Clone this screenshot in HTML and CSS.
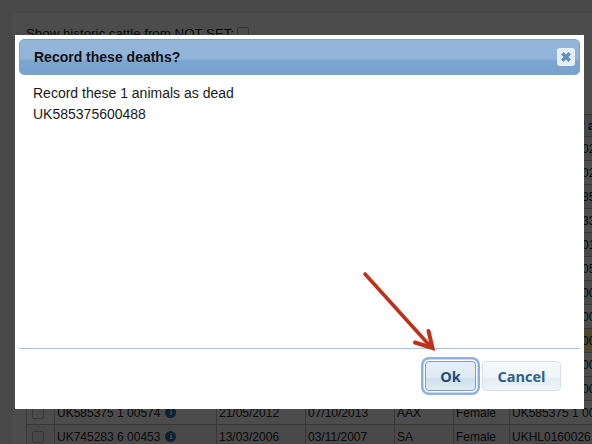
FILE: index.html
```html
<!DOCTYPE html>
<html lang="en">
<head>
<meta charset="utf-8">
<title>Record these deaths?</title>
<link rel="stylesheet" href="styles.css">
</head>
<body>
<main class="page">
  <div class="filter"><span>Show historic cattle from NOT SET:</span><input type="checkbox" class="check"></div>
  <table class="cattle">
    <thead><tr><th></th><th>Tag</th><th>Born</th><th>Died</th><th>Breed</th><th>Sex</th><th>Dam Tag Ref area</th></tr></thead>
    <tbody>
      <tr><td><input type="checkbox" class="check"></td><td>UK585375 1 00201</td><td>11/02/2011</td><td>04/09/2013</td><td>AAX</td><td>Female</td><td>UK585375 1 02</td></tr>
      <tr><td><input type="checkbox" class="check"></td><td>UK585375 1 00212</td><td>19/02/2011</td><td>12/08/2013</td><td>AAX</td><td>Female</td><td>UK585375 1 02</td></tr>
      <tr><td><input type="checkbox" class="check"></td><td>UK585375 1 00233</td><td>03/03/2011</td><td>22/07/2013</td><td>SA</td><td>Female</td><td>UK585375 1 85</td></tr>
      <tr><td><input type="checkbox" class="check"></td><td>UK585375 1 00240</td><td>14/03/2011</td><td>02/10/2013</td><td>AAX</td><td>Female</td><td>UK585375 1 33</td></tr>
      <tr><td><input type="checkbox" class="check"></td><td>UK585375 1 00255</td><td>21/03/2011</td><td>17/06/2013</td><td>AAX</td><td>Female</td><td>UK585375 1 01</td></tr>
      <tr><td><input type="checkbox" class="check"></td><td>UK585375 1 00261</td><td>02/04/2011</td><td>09/05/2013</td><td>SA</td><td>Female</td><td>UK585375 1 05</td></tr>
      <tr><td><input type="checkbox" class="check"></td><td>UK585375 1 00278</td><td>16/04/2011</td><td>28/09/2013</td><td>AAX</td><td>Female</td><td>UK585375 1 00</td></tr>
      <tr><td><input type="checkbox" class="check"></td><td>UK585375 1 00289</td><td>29/04/2011</td><td>30/08/2013</td><td>AAX</td><td>Female</td><td>UK585375 1 00</td></tr>
      <tr class="flagged"><td><input type="checkbox" class="check"></td><td>UK585375 6 00488</td><td>08/05/2011</td><td>11/10/2013</td><td>AAX</td><td>Female</td><td>UK585375 1 00</td></tr>
      <tr><td><input type="checkbox" class="check"></td><td>UK585375 1 00502</td><td>20/05/2011</td><td>01/10/2013</td><td>SA</td><td>Female</td><td>UK585375 1 00</td></tr>
      <tr><td><input type="checkbox" class="check"></td><td>UK585375 1 00519</td><td>07/06/2011</td><td>15/07/2013</td><td>AAX</td><td>Female</td><td>UK585375 1 00</td></tr>
      <tr><td><input type="checkbox" class="check"></td><td><span class="tag">UK585375 1 00574<i class="info">i</i></span></td><td>21/05/2012</td><td>07/10/2013</td><td>AAX</td><td>Female</td><td>UK585375 1 00</td></tr>
      <tr><td><input type="checkbox" class="check"></td><td><span class="tag">UK745283 6 00453<i class="info">i</i></span></td><td>13/03/2006</td><td>03/11/2007</td><td>SA</td><td>Female</td><td>UKHL0160026</td></tr>
    </tbody>
  </table>
</main>
<div class="overlay"></div>
<section class="modal" role="dialog" aria-labelledby="dlg-title">
  <header class="modal-head">
    <h2 id="dlg-title">Record these deaths?</h2>
    <button class="close" aria-label="Close">
      <svg viewBox="0 0 12 12" width="12" height="12"><path d="M2.3 2.3 9.7 9.7M9.7 2.3 2.3 9.7" fill="none" stroke="#5f8fbe" stroke-width="3.4"/></svg>
    </button>
  </header>
  <div class="modal-body">
    <p>Record these 1 animals as dead</p>
    <p>UK585375600488</p>
  </div>
  <footer class="modal-foot">
    <button class="btn btn-ok">Ok</button>
    <button class="btn">Cancel</button>
  </footer>
</section>
<svg class="arrow" viewBox="0 0 592 444" width="592" height="444" aria-hidden="true">
  <path d="M365 274 431 347" fill="none" stroke="#c0311a" stroke-width="3.6" stroke-linecap="round"/>
  <path d="M428.5 331 432.5 348 415 342.5" fill="none" stroke="#c0311a" stroke-width="4" stroke-linecap="round" stroke-linejoin="miter"/>
</svg>
</body>
</html>
```
FILE: styles.css
```css
html, body {
  margin: 0;
  padding: 0;
  height: 444px;
  overflow: hidden;
  background: #f0f0f0;
  font-family: "Liberation Sans", Arial, sans-serif;
}

.page {
  margin: 13px 0 0 13px;
  height: 431px;
  background: #fff;
  padding: 12px 0 0 13px;
  box-sizing: border-box;
  overflow: hidden;
}

.filter {
  display: flex;
  align-items: center;
  gap: 3px;
  font-size: 13.3px;
  color: #222;
  height: 16px;
  margin-bottom: 73px;
  white-space: nowrap;
}

.check {
  display: block;
  width: 12px;
  height: 12px;
  margin: 0;
  appearance: none;
  background: transparent;
  border: 1px solid #b4b4b4;
  border-radius: 2px;
}

.cattle {
  border-collapse: collapse;
  table-layout: fixed;
  width: 620px;
  font-size: 12px;
  color: #222;
}

.cattle th {
  height: 21px;
  padding: 0 3px 0 2px;
  text-align: left;
  color: #14466e;
  font-weight: bold;
  border: 1px solid #bbb;
  background: #e9eef3;
}

.cattle td {
  height: 23px;
  padding: 0 3px 0 2px;
  border: 1px solid #bbb;
  white-space: nowrap;
  overflow: hidden;
}

.cattle th:nth-child(1), .cattle td:nth-child(1) { width: 21px; padding: 0 3px 0 5px; }
.cattle th:nth-child(1), .cattle td:nth-child(1) { width: 19px; }
.cattle th:nth-child(2), .cattle td:nth-child(2) { width: 156px; }
.cattle th:nth-child(3), .cattle td:nth-child(3) { width: 83px; }
.cattle th:nth-child(4), .cattle td:nth-child(4) { width: 83px; }
.cattle th:nth-child(5), .cattle td:nth-child(5) { width: 53px; }
.cattle th:nth-child(6), .cattle td:nth-child(6) { width: 50px; }

.cattle tbody tr:nth-child(odd) td { background: #f6f6f6; }
.cattle tbody tr.flagged td { background: #ffee99; }

.tag {
  display: inline-flex;
  align-items: center;
  gap: 5px;
}

.info {
  display: inline-block;
  width: 11px;
  height: 11px;
  border-radius: 50%;
  background: #2f6ea6;
  color: #fff;
  font: bold 9px/11px "Liberation Serif", serif;
  text-align: center;
}

.overlay {
  position: fixed;
  inset: 0;
  background: rgba(0, 0, 0, 0.7);
}

.modal {
  position: fixed;
  left: 15px;
  top: 35px;
  width: 569px;
  height: 374px;
  background: #fff;
  padding: 4px;
  box-sizing: border-box;
  display: flex;
  flex-direction: column;
}

.modal-head {
  height: 36px;
  box-sizing: border-box;
  display: flex;
  align-items: center;
  justify-content: space-between;
  padding: 0 4px 0 14px;
  border: 1px solid #79a3cc;
  border-radius: 5px;
  background: linear-gradient(#94b6da 0, #90b3d8 55%, #7aa5cf 62%, #78a3ce 100%);
}

.modal-head h2 {
  margin: 0;
  font-size: 14px;
  font-weight: bold;
  color: #111;
}

.close {
  width: 18px;
  height: 18px;
  padding: 0;
  display: flex;
  align-items: center;
  justify-content: center;
  border: 0;
  border-radius: 3px;
  background: #e6eff8;
}

.modal-body {
  flex: 1;
  padding: 8px 14px 0;
  font-size: 14px;
  line-height: 21px;
  color: #1a1a1a;
}

.modal-body p {
  margin: 0;
}

.modal-foot {
  height: 57px;
  box-sizing: border-box;
  border-top: 1px solid #a9c3dc;
  display: flex;
  align-items: center;
  justify-content: flex-end;
  gap: 6px;
  padding: 0 19px 2px 0;
}

.btn {
  height: 30px;
  width: 79px;
  box-sizing: border-box;
  padding: 0;
  border: 1px solid #d3e1ee;
  border-radius: 4px;
  background: linear-gradient(#f5f9fc 0, #eef4f9 55%, #e3edf5 60%, #eef4f9 100%);
  font-family: "Open Sans", sans-serif;
  font-size: 14.5px;
  font-weight: 700;
  color: #2f5f8c;
}

.btn-ok {
  width: 51px;
  color: #1f4c78;
  border: 1px solid #7e9fc4;
  background: linear-gradient(#e6f0f8 0, #dfeaf4 55%, #d0e0ee 60%, #e0ebf5 100%);
  box-shadow: 0 0 0 1.5px #fff, 0 0 0 4px #8eb0e2;
}

.arrow {
  position: fixed;
  left: 0;
  top: 0;
  pointer-events: none;
}
```
